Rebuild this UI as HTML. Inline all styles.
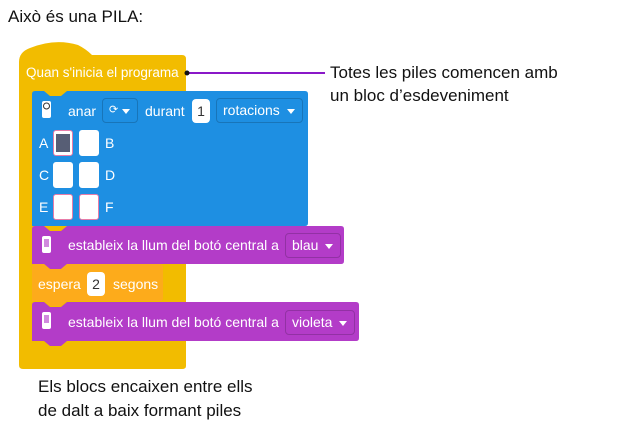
<!DOCTYPE html>
<html><head><meta charset="utf-8"><style>
*{margin:0;padding:0;box-sizing:border-box}
body{width:629px;height:429px;background:#fff;position:relative;overflow:hidden;font-family:"Liberation Sans",sans-serif}
.a{position:absolute;white-space:nowrap}
.big{font-size:17px;color:#111}
.dd{position:absolute;white-space:nowrap;border:1px solid rgba(0,0,0,.18);border-radius:4px;color:#fff;font-size:14px;padding:0 0 0 6px;line-height:23px;height:25px}
.dd i{position:absolute;right:7px;top:10px;width:0;height:0;border-left:4px solid transparent;border-right:4px solid transparent;border-top:5px solid #fff}
.num{position:absolute;background:#fff;border-radius:4px;color:#333;font-size:14px;text-align:center;line-height:24px;height:24px}
.sq{position:absolute;width:20px;height:26px;background:#fff;border-radius:3px;border:1px solid #e87ca8}
.lt{position:absolute;white-space:nowrap;color:#fff;font-size:14px}
</style></head><body>
<div class="a big" style="left:8px;top:7px">Això és una PILA:</div>
<svg class="a" style="left:0;top:0" width="629" height="429">
<path d="M19 62 Q19 52 30 48 Q55 38 78 45 Q86 49 92 55 L182 55 Q186 55 186 59 L186 366 Q186 369 182 369 L23 369 Q19 369 19 365 Z" fill="#f2bc00"/>
<line x1="187" y1="73" x2="325" y2="73" stroke="#8a18c8" stroke-width="2"/>
<circle cx="187" cy="73" r="2.5" fill="#111"/>
<path d="M32 94 Q32 91 35 91 L44 91 L50 96 L61 96 L67 91 L305 91 Q308 91 308 94 L308 223 Q308 226 305 226 L32 226 Z" fill="#1e8fe2"/>
<path d="M32 229 Q32 226 35 226 L44 226 L50 231 L61 231 L67 226 L341 226 Q344 226 344 229 L344 261 Q344 264 341 264 L67 264 L61 269 L50 269 L44 264 L32 264 Z" fill="#b33cc8"/>
<path d="M32 267 Q32 264 35 264 L44 264 L50 269 L61 269 L67 264 L160 264 Q163 264 163 267 L163 298 Q163 301 160 301 L67 301 L61 306 L50 306 L44 301 L32 301 Z" fill="#fdab1b"/>
<path d="M32 305 Q32 302 35 302 L44 302 L50 307 L61 307 L67 302 L356 302 Q359 302 359 305 L359 338 Q359 341 356 341 L67 341 L61 346 L50 346 L44 341 L32 341 Z" fill="#b33cc8"/>
<rect x="42" y="101" width="9" height="17" rx="2" fill="#fff"/><circle cx="46.5" cy="106" r="3" fill="none" stroke="#333" stroke-width="1"/>
<rect x="42" y="236" width="9" height="17" rx="2" fill="#fff"/><rect x="44" y="239" width="5" height="8" fill="#b33cc8" opacity=".6"/>
<rect x="42" y="312" width="9" height="17" rx="2" fill="#fff"/><rect x="44" y="315" width="5" height="8" fill="#b33cc8" opacity=".6"/>
</svg>
<div class="a" style="left:26px;top:65px;color:#fff;font-size:13.5px">Quan s'inicia el programa</div>
<div class="a big" style="left:330px;top:61px;line-height:23px">Totes les piles comencen amb<br>un bloc d’esdeveniment</div>
<div class="a big" style="left:38px;top:375px;line-height:24px">Els blocs encaixen entre ells<br>de dalt a baix formant piles</div>

<div class="lt" style="left:68px;top:103px">anar</div>
<div class="dd" style="left:102px;top:98px;width:36px;font-size:11px">⟳<i></i></div>
<div class="lt" style="left:145px;top:103px">durant</div>
<div class="num" style="left:192px;top:99px;width:18px">1</div>
<div class="dd" style="left:216px;top:98px;width:87px">rotacions<i></i></div>
<div class="lt" style="left:39px;top:135px">A</div><div class="lt" style="left:105px;top:135px">B</div>
<div class="lt" style="left:39px;top:167px">C</div><div class="lt" style="left:105px;top:167px">D</div>
<div class="lt" style="left:39px;top:199px">E</div><div class="lt" style="left:105px;top:199px">F</div>
<div class="sq" style="left:53px;top:130px"><div style="margin:3px 2px;width:14px;height:18px;background:#575e75"></div></div>
<div class="sq" style="left:79px;top:130px;border-color:#fff"></div>
<div class="sq" style="left:53px;top:162px;border-color:#fff"></div>
<div class="sq" style="left:79px;top:162px;border-color:#fff"></div>
<div class="sq" style="left:53px;top:194px"></div>
<div class="sq" style="left:79px;top:194px"></div>

<div class="lt" style="left:68px;top:237px">estableix la llum del botó central a</div>
<div class="dd" style="left:285px;top:233px;width:56px">blau<i></i></div>
<div class="lt" style="left:38px;top:276px">espera</div>
<div class="num" style="left:87px;top:272px;width:18px">2</div>
<div class="lt" style="left:113px;top:276px">segons</div>
<div class="lt" style="left:68px;top:314px">estableix la llum del botó central a</div>
<div class="dd" style="left:285px;top:310px;width:70px">violeta<i></i></div>
</body></html>
